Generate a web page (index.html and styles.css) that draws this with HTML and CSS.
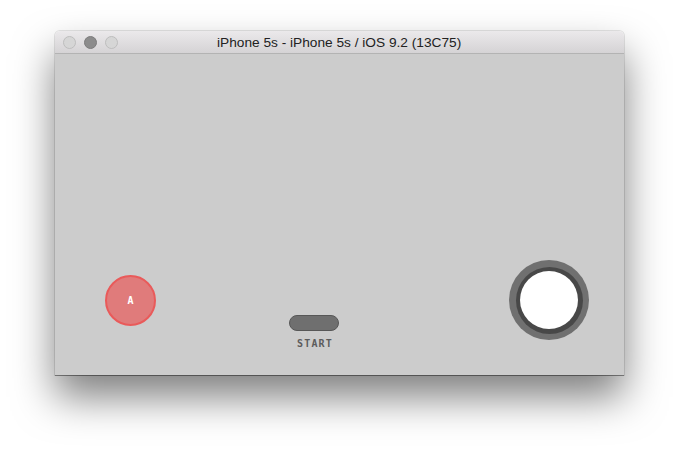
FILE: index.html
```html
<!DOCTYPE html>
<html lang="en">
<head>
    <meta charset="UTF-8">
    <title>iPhone 5s - iPhone 5s / iOS 9.2 (13C75)</title>
    <link rel="stylesheet" href="styles.css">
</head>
<body>
    <div class="window">
        <div class="titlebar">
            <div class="lights">
                <span class="light"></span>
                <span class="light dark"></span>
                <span class="light"></span>
            </div>
            <div class="title">iPhone 5s - iPhone 5s / iOS 9.2 (13C75)</div>
        </div>
        <div class="screen">
            <div class="btn-a">A</div>
            <div class="start">
                <div class="start-pill"></div>
                <div class="start-label">START</div>
            </div>
            <div class="stick">
                <div class="stick-ring">
                    <div class="stick-knob"></div>
                </div>
            </div>
        </div>
    </div>
</body>
</html>
```

FILE: styles.css
```css
html, body {
    height: 100%;
}
body {
    margin: 0;
    min-height: 454px;
    background: #ffffff;
    font-family: "Liberation Sans", Arial, sans-serif;
    overflow: hidden;
}
.window {
    width: 569px;
    margin: 31px 0 0 55px;
    border-radius: 5px 5px 0 0;
    box-shadow: 0 0 0 1px rgba(0, 0, 0, 0.1), 0 1px 0 rgba(0, 0, 0, 0.35), 0 22px 40px rgba(0, 0, 0, 0.5);
    overflow: hidden;
}
.titlebar {
    height: 22px;
    position: relative;
    display: flex;
    align-items: center;
    background: linear-gradient(#ebe9eb, #d5d3d5);
    border-bottom: 1px solid #b3b3b3;
}
.lights {
    display: flex;
    gap: 8px;
    padding-left: 8px;
}
.light {
    width: 11px;
    height: 11px;
    border-radius: 50%;
    background: #d6d6d6;
    border: 0.5px solid #bdbdbd;
}
.light.dark {
    background: #8c8c8c;
    border-color: #7c7c7c;
}
.title {
    position: absolute;
    left: 162px;
    top: 4px;
    font-size: 13.7px;
    color: #222;
}
.screen {
    height: 321px;
    background: #cccccc;
    display: flex;
    align-items: flex-end;
}
.btn-a {
    width: 47px;
    height: 47px;
    margin: 0 0 49px 50px;
    border-radius: 50%;
    background: #e07b7b;
    border: 2px solid #e95a5a;
    color: #fff;
    font-family: "DejaVu Sans Mono", monospace;
    font-weight: bold;
    font-size: 10px;
    display: flex;
    align-items: center;
    justify-content: center;
}
.start {
    margin: 0 0 26px 133px;
    display: flex;
    flex-direction: column;
    align-items: center;
}
.start-pill {
    width: 48px;
    height: 14px;
    border-radius: 8px;
    background: #6f6f6f;
    border: 1.5px solid #575757;
}
.start-label {
    margin-top: 7px;
    font-family: "DejaVu Sans Mono", monospace;
    font-weight: bold;
    font-size: 10px;
    letter-spacing: 1.2px;
    color: #5c5c5c;
    padding-left: 2px;
}
.stick {
    margin: 0 35px 35px auto;
    width: 80px;
    height: 80px;
    border-radius: 50%;
    background: #707070;
    display: flex;
    align-items: center;
    justify-content: center;
}
.stick-ring {
    width: 67px;
    height: 67px;
    border-radius: 50%;
    background: #484848;
    display: flex;
    align-items: center;
    justify-content: center;
}
.stick-knob {
    width: 58px;
    height: 58px;
    border-radius: 50%;
    background: #ffffff;
}
```
